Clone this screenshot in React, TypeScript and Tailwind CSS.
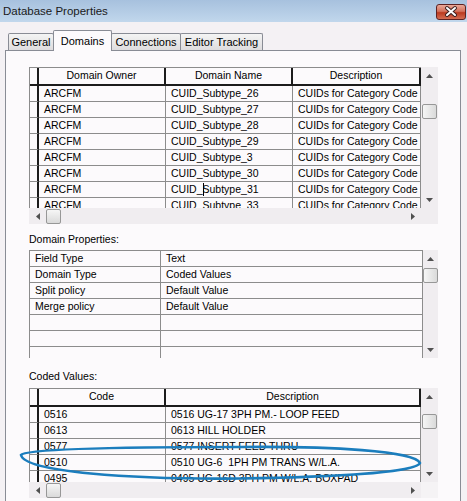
import React from 'react'

const domainRows = [
  'CUID_Subtype_26',
  'CUID_Subtype_27',
  'CUID_Subtype_28',
  'CUID_Subtype_29',
  'CUID_Subtype_3',
  'CUID_Subtype_30',
  'CUID_Subtype_31',
  'CUID_Subtype_33',
]

const props = [
  ['Field Type', 'Text'],
  ['Domain Type', 'Coded Values'],
  ['Split policy', 'Default Value'],
  ['Merge policy', 'Default Value'],
  ['', ''],
  ['', ''],
  ['', ''],
]

const coded = [
  ['0516', '0516 UG-17 3PH PM.- LOOP FEED'],
  ['0613', '0613 HILL HOLDER'],
  ['0577', '0577 INSERT FEED THRU'],
  ['0510', '0510 UG-6  1PH PM TRANS W/L.A.'],
  ['0495', '0495 UG-16D 3PH PM W/L.A. BOXPAD'],
]

function Arrow({ dir }: { dir: 'up' | 'down' | 'left' | 'right' }) {
  const pts = {
    up: '0,4 3.5,0 7,4',
    down: '0,0 3.5,4 7,0',
    left: '4,0 0,3.5 4,7',
    right: '0,0 4,3.5 0,7',
  }[dir]
  const vertical = dir === 'up' || dir === 'down'
  return (
    <svg width={vertical ? 7 : 4} height={vertical ? 4 : 7} viewBox={vertical ? '0 0 7 4' : '0 0 4 7'}>
      <polygon points={pts} fill="#505050" />
    </svg>
  )
}

function VScroll({ thumb }: { thumb: string }) {
  return (
    <div className="flex flex-col bg-[#f0edf0]">
      <div className="flex h-[17px] shrink-0 items-center justify-center">
        <Arrow dir="up" />
      </div>
      <div className="flex-1">
        <div
          className={`mx-auto h-[15px] w-[15px] rounded-[2px] border border-[#979797] bg-linear-to-r from-[#f6f6f6] to-[#dadada] ${thumb}`}
        />
      </div>
      <div className="flex h-[17px] shrink-0 items-center justify-center">
        <Arrow dir="down" />
      </div>
    </div>
  )
}

function HScroll() {
  return (
    <div className="flex items-center bg-[#f0edf0]">
      <div className="flex w-[17px] shrink-0 items-center justify-center">
        <Arrow dir="left" />
      </div>
      <div className="h-[15px] w-[15px] rounded-[2px] border border-[#979797] bg-linear-to-b from-[#f6f6f6] to-[#dadada]" />
      <div className="flex-1" />
      <div className="flex w-[17px] shrink-0 items-center justify-center">
        <Arrow dir="right" />
      </div>
    </div>
  )
}

const cell = 'flex items-center overflow-hidden whitespace-nowrap border-r border-b border-[#8c8c8c] pl-[5px]'
const rowHead = 'w-[9px] shrink-0 border-r-2 border-b border-r-[#1c1c1c] border-b-[#8c8c8c]'
const headCell = 'flex items-center justify-center overflow-hidden whitespace-nowrap border-r-2 border-b-2 border-[#1c1c1c]'

export default function App() {
  return (
    <div className="relative h-[501px] w-[467px] overflow-hidden bg-[#f4f1f4] font-['Liberation_Sans',Arial,sans-serif] text-black">
      {/* title bar */}
      <div className="flex h-[22px] items-start justify-between bg-linear-to-b from-[#a7c1de] to-[#c1d7ec]">
        <div className="pl-[3px] pt-[4px] text-[11.5px] leading-[14px] text-[#1a1a1a]">Database Properties</div>
        <div className="mr-[1px] mt-[4px] h-[16px] w-[30px] rounded-[3px] border border-[#5e2222] bg-[linear-gradient(#eaa899,#d4725c_45%,#bb3a1f_55%,#d46d52)]">
          <svg width="28" height="14" viewBox="0 0 28 14">
            <path d="M10 3 L18 10 M18 3 L10 10" stroke="#3b2020" strokeWidth="4" strokeLinecap="round" />
            <path d="M10 3 L18 10 M18 3 L10 10" stroke="#ffffff" strokeWidth="2" strokeLinecap="round" />
          </svg>
        </div>
      </div>

      {/* tabs */}
      <div className="mt-[8px] flex h-[20px] items-end pl-[8px] text-[11px]">
        <div className="flex h-[17px] w-[46px] items-center justify-center rounded-t-[2px] border border-b-0 border-[#898c95] bg-linear-to-b from-[#f4f4f4] to-[#dedcde]">
          General
        </div>
        <div className="relative z-10 -mb-px -ml-px flex h-[21px] w-[59px] items-start justify-center rounded-t-[2px] border border-b-0 border-[#898c95] bg-[#fcfafc] pt-[2px]">
          Domains
        </div>
        <div className="-ml-px flex h-[17px] w-[70px] items-center justify-center rounded-t-[2px] border border-b-0 border-[#898c95] bg-linear-to-b from-[#f4f4f4] to-[#dedcde]">
          Connections
        </div>
        <div className="-ml-px flex h-[17px] w-[83px] items-center justify-center rounded-t-[2px] border border-b-0 border-[#898c95] bg-linear-to-b from-[#f4f4f4] to-[#dedcde]">
          Editor Tracking
        </div>
      </div>

      {/* panel */}
      <div className="ml-[5px] h-[451px] w-[456px] border border-b-0 border-[#898c95] bg-[#fcfafc] pl-[23px] pt-[16px] text-[10.5px]">
        {/* domains grid */}
        <div className="grid grid-cols-[392px_17px] grid-rows-[141px_16px]">
          <div className="overflow-hidden border-l border-t border-[#8c8c8c]">
            <div className="flex h-[18px]">
              <div className="w-[9px] shrink-0 border-r-2 border-b-2 border-[#1c1c1c]" />
              <div className={`${headCell} w-[127px] shrink-0`}>Domain Owner</div>
              <div className={`${headCell} w-[127px] shrink-0`}>Domain Name</div>
              <div className={`${headCell} flex-1`}>Description</div>
            </div>
            {domainRows.map((name) => (
              <div key={name} className="flex h-[16px]">
                <div className={rowHead} />
                <div className={`${cell} w-[127px] shrink-0`}>ARCFM</div>
                <div className={`${cell} w-[127px] shrink-0`}>
                  {name === 'CUID_Subtype_31' ? (
                    <>
                      CUID_
                      <span className="-mr-px inline-block h-[13px] w-px bg-black" />
                      Subtype_31
                    </>
                  ) : (
                    name
                  )}
                </div>
                <div className={`${cell} flex-1`}>CUIDs for Category Code</div>
              </div>
            ))}
          </div>
          <VScroll thumb="mt-[20px]" />
          <HScroll />
          <div className="bg-[#f0edf0]" />
        </div>

        <div className="mt-[9px] h-[13px] leading-[13px]">Domain Properties:</div>

        {/* domain properties grid */}
        <div className="mt-[4px] grid h-[108px] grid-cols-[394px_15px]">
          <div className="overflow-hidden border-l border-t border-[#8c8c8c]">
            {props.map(([k, v], i) => (
              <div key={i} className="flex h-[16px]">
                <div className={`${cell} w-[131px] shrink-0`}>{k}</div>
                <div className={`${cell} flex-1`}>{v}</div>
              </div>
            ))}
          </div>
          <VScroll thumb="mt-[1px]" />
        </div>

        <div className="mt-[12px] h-[13px] leading-[13px]">Coded Values:</div>

        {/* coded values grid */}
        <div className="mt-[5px] grid grid-cols-[392px_17px] grid-rows-[94px_16px]">
          <div className="overflow-hidden border-l border-t border-[#8c8c8c]">
            <div className="flex h-[18px]">
              <div className="w-[9px] shrink-0 border-r-2 border-b-2 border-[#1c1c1c]" />
              <div className={`${headCell} w-[127px] shrink-0`}>Code</div>
              <div className={`${headCell} flex-1`}>Description</div>
            </div>
            {coded.map(([code, desc]) => (
              <div key={code} className="flex h-[16px]">
                <div className={rowHead} />
                <div className={`${cell} w-[127px] shrink-0`}>{code}</div>
                <div className={`${cell} flex-1 whitespace-pre`}>{desc}</div>
              </div>
            ))}
          </div>
          <VScroll thumb="mt-[9px]" />
          <HScroll />
          <div className="bg-[#f5f3f5]" />
        </div>
      </div>

      {/* hand-drawn annotation */}
      <svg className="pointer-events-none absolute left-0 top-0" width="467" height="501" viewBox="0 0 467 501">
        <path
          d="M21 455 C25 449 120 447 240 447 C330 446 415 451 420 463 C416 472 340 477 240 478.5 C130 479.5 25 472 21 455 Z"
          fill="none"
          stroke="#1b7dbd"
          strokeWidth="2.6"
        />
      </svg>
    </div>
  )
}
